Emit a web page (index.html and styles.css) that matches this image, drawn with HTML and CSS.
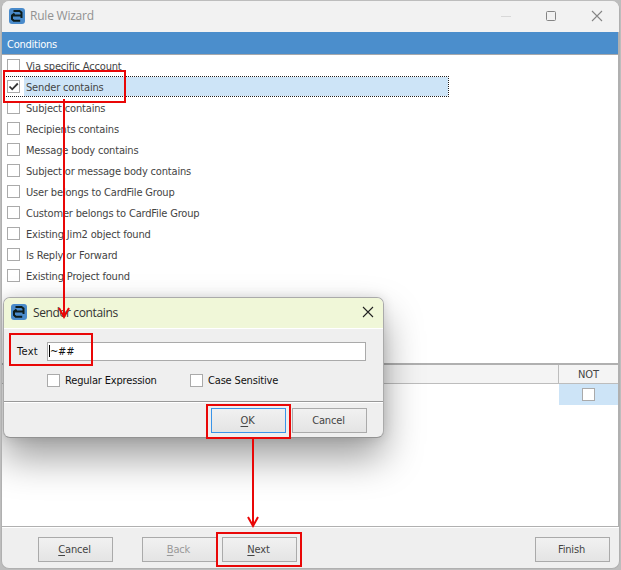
FILE: index.html
```html
<!DOCTYPE html>
<html lang="en">
<head>
<meta charset="utf-8">
<title>Rule Wizard</title>
<link rel="stylesheet" href="styles.css">
</head>
<body>
<svg width="0" height="0" class="defs"><symbol id="logo" viewBox="0 0 16 16"><rect width="16" height="16" rx="3" fill="#4a8bcb"/><path d="M4.5 3H10.5L12.5 4.5V10M3.5 7.5H12.5M5.5 5.5L3 7.5V11L4.8 12.8H11.2" fill="none" stroke="#0c1c1c" stroke-width="2"/></symbol></svg>
<main class="window">
  <header class="titlebar">
    <svg class="logo"><use href="#logo"/></svg>
    <h1>Rule Wizard</h1>
    <svg class="controls" viewBox="0 0 104 12"><path d="M0 6.5H10" stroke="#d8d8d8"/><rect x="45.5" y="1.5" width="9" height="9" rx="1" fill="none" stroke="#858585"/><path d="M91 1L101 11M101 1L91 11" stroke="#858585" stroke-width="1.1"/></svg>
  </header>
  <section class="content">
    <div class="heading">Conditions</div>
    <ul class="conditions">
      <li><i class="box"></i><span>Via specific Account</span></li>
      <li class="selected"><i class="box"><svg viewBox="0 0 11 11"><path d="M1.5 5.5L4.2 8.3L9.8 2.5" fill="none" stroke="#333" stroke-width="1.8"/></svg></i><span>Sender contains</span></li>
      <li><i class="box"></i><span>Subject contains</span></li>
      <li><i class="box"></i><span>Recipients contains</span></li>
      <li><i class="box"></i><span>Message body contains</span></li>
      <li><i class="box"></i><span>Subject or message body contains</span></li>
      <li><i class="box"></i><span>User belongs to CardFile Group</span></li>
      <li><i class="box"></i><span>Customer belongs to CardFile Group</span></li>
      <li><i class="box"></i><span>Existing Jim2 object found</span></li>
      <li><i class="box"></i><span>Is Reply or Forward</span></li>
      <li><i class="box"></i><span>Existing Project found</span></li>
    </ul>
    <div class="grid-head"><span>NOT</span></div>
    <div class="grid-body"><div class="cell"><i class="box"></i></div></div>
    <div class="dialog">
      <div class="dialog-title"><svg class="logo"><use href="#logo"/></svg><h2>Sender contains</h2><svg class="close" viewBox="0 0 12 12"><path d="M1 1L11 11M11 1L1 11" stroke="#222" stroke-width="1.1"/></svg></div>
      <div class="dialog-body">
        <div class="field"><label>Text</label><div class="input"><i class="caret"></i>~##</div></div>
        <div class="options"><i class="box"></i><span class="regex">Regular Expression</span><i class="box"></i><span>Case Sensitive</span></div>
      </div>
      <div class="dialog-actions"><div class="button primary"><span><u>O</u>K</span></div><div class="button">Cancel</div></div>
    </div>
  </section>
  <footer class="actions">
    <div class="button"><span><u>C</u>ancel</span></div>
    <div class="button back"><span><u>B</u>ack</span></div>
    <div class="button next"><span><u>N</u>ext</span></div>
    <div class="button finish">Finish</div>
  </footer>
</main>
<svg class="notes" viewBox="0 0 621 570">
  <g fill="none" stroke="#e90707" stroke-width="2">
    <rect x="4" y="71" width="121" height="31"/>
    <rect x="10" y="334" width="82" height="31"/>
    <rect x="207" y="405" width="83" height="33"/>
    <rect x="217" y="533" width="84" height="33"/>
    <path d="M64 99V317M59 308L64 317L69 308M253 439V526M248 517L253 526L258 517"/>
  </g>
</svg>
</body>
</html>
```

FILE: styles.css
```css
* { box-sizing: border-box; }
body { margin: 0; width: 621px; height: 570px; overflow: hidden; background: #bdbdbd; font: 11px/14px "DejaVu Sans Condensed", "DejaVu Sans", sans-serif; letter-spacing: -.17px; color: #444; padding: 1px 0 1px 1px; }
.defs { position: absolute; }
.window { width: 619px; height: 568px; border: 1px solid #b0b0b0; border-top: 0; border-radius: 8px; background: #efefef; overflow: hidden; display: flex; flex-direction: column; }
.titlebar { height: 31px; flex: none; background: #f2f2f2; display: flex; align-items: center; padding: 0 14px 2px 7px; }
.logo { width: 16px; height: 16px; flex: none; }
h1, h2 { margin: 0; font: 12px/16px "Open Sans", sans-serif; }
h1 { margin-left: 5px; color: #919191; flex: 1; letter-spacing: -.22px; }
.controls { width: 104px; height: 12px; }
.content { position: relative; height: 495px; flex: none; border-right: 1px solid #b0b0b0; border-bottom: 1px solid #b0b0b0; background: #fff; display: flex; flex-direction: column; }
.heading { height: 23px; flex: none; background: #4b8ecc; border-bottom: 1px solid #a5a8ac; color: #fff; padding: 6px 5px 0; letter-spacing: -.25px; }
.conditions { list-style: none; margin: 0; padding: 0 0 0 1px; height: 308px; flex: none; }
li { display: flex; align-items: center; height: 21px; padding-left: 4px; }
li span { margin-left: 4px; padding-left: 2px; height: 21px; line-height: 23px; white-space: nowrap; }
.box { display: block; width: 13px; height: 13px; flex: none; border: 1px solid #aaa; background: #fff; }
.box svg { display: block; width: 11px; height: 11px; }
.selected { width: 446px; border: 1px dotted #222; border-left: 0; padding-left: 4px; }
.selected span { height: 19px; line-height: 21px; background: #cde4f7; flex: 1; }
.grid-head { height: 21px; flex: none; border-top: 2px solid #b0b0b0; border-bottom: 1px solid #bdbdbd; background: #f4f4f4; display: flex; justify-content: flex-end; }
.grid-head span { width: 60px; border-left: 1px solid #bdbdbd; text-align: center; line-height: 20px; letter-spacing: 0; }
.grid-body { display: flex; justify-content: flex-end; }
.cell { width: 59px; height: 21px; background: #cde4f7; display: grid; place-items: center; }
.button { width: 75px; height: 25px; flex: none; border: 1px solid #aaa; background: linear-gradient(#f1f1f1, #e4e4e4); text-align: center; line-height: 24px; padding-right: 2px; }
u { text-underline-offset: 2px; }
.actions { flex: 1; border-top: 1px solid #fff; display: flex; padding: 9px 9px 0 36px; }
.back { margin-left: 29px; color: #999; }
.next { margin-left: 5px; }
.finish { margin-left: auto; }
.dialog { position: absolute; left: 1px; top: 265px; width: 381px; height: 141px; border: 1px solid #aaa; border-bottom-color: #929292; border-radius: 7px; background: #efefef; box-shadow: 0 20px 38px rgba(0,0,0,.38), 0 0 12px rgba(0,0,0,.12); overflow: hidden; display: flex; flex-direction: column; }
.dialog-title { height: 31px; flex: none; background: #f0f7d8; border-bottom: 1px solid #fff; display: flex; align-items: center; padding: 0 9px 0 7px; }
.dialog-title .logo { margin-top: -2px; }
.dialog-title h2 { flex: 1; margin-left: 6px; color: #333; letter-spacing: -.36px; }
.close { width: 12px; height: 12px; margin-top: -2px; }
.dialog-body { height: 73px; flex: none; border-bottom: 1px solid #999; color: #111; }
.field { display: flex; margin-top: 13px; padding-left: 13px; height: 19px; line-height: 19px; }
.field label { width: 30px; letter-spacing: .3px; }
.input { width: 319px; border: 1px solid #aaa; background: #fff; line-height: 18px; display: flex; padding-left: 1px; }
.caret { width: 1px; height: 12px; margin-top: 2px; background: #000; }
.options { display: flex; align-items: center; margin: 12px 0 0 43px; height: 14px; }
.options span { margin-left: 5px; white-space: nowrap; position: relative; top: 1px; }
.options .regex { width: 125px; }
.dialog-actions { flex: 1; border-top: 1px solid #fff; display: flex; justify-content: flex-end; padding: 5px 16px 0 0; gap: 6px; }
.primary { border-color: #3a94e8; }
.notes { position: absolute; left: 0; top: 0; width: 621px; height: 570px; pointer-events: none; }
```
